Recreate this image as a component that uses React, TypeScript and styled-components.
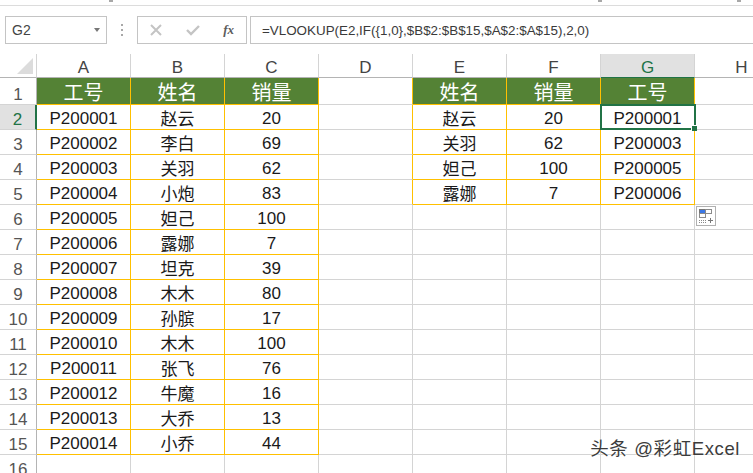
import React from 'react';
import styled, { createGlobalStyle } from 'styled-components';

const GlobalStyle = createGlobalStyle`
  html, body {
    margin: 0;
    padding: 0;
    background: #fff;
    overflow: hidden;
  }
`;

const FONT = `"Liberation Sans", "Noto Sans CJK SC", sans-serif`;

const Page = styled.div`
  position: relative;
  width: 753px;
  height: 473px;
  overflow: hidden;
  background: #fff;
  font-family: ${FONT};
`;

const RibbonEdge = styled.div`
  position: relative;
  height: 5px;
  border-bottom: 1px solid #dcdcdc;
  display: flex;
  align-items: flex-start;
`;

const RibbonTick = styled.span<{ $gap: number }>`
  width: 4px;
  height: 2px;
  margin-left: ${(p) => p.$gap}px;
  background: #a8a8a8;
`;

const FormulaRow = styled.div`
  display: flex;
  align-items: stretch;
  height: 28px;
  margin-top: 10px;
  padding-left: 5px;
`;

const NameBox = styled.div`
  box-sizing: border-box;
  width: 102px;
  border: 1px solid #c4c4c4;
  display: flex;
  align-items: center;
  justify-content: space-between;
  padding: 0 6px 0 6px;
  font-size: 14px;
  color: #444;
`;

const Caret = styled.span`
  width: 0;
  height: 0;
  border-left: 3.5px solid transparent;
  border-right: 3.5px solid transparent;
  border-top: 4px solid #777;
`;

const Grip = styled.div`
  width: 30px;
  display: flex;
  flex-direction: column;
  align-items: center;
  justify-content: center;
  gap: 3px;
`;

const GripDot = styled.span`
  width: 2px;
  height: 2px;
  background: #a8a8a8;
`;

const FxGroup = styled.div`
  box-sizing: border-box;
  width: 110px;
  border: 1px solid #c4c4c4;
  display: flex;
  align-items: center;
  padding: 0 12px 0 12px;
  justify-content: space-between;
`;

const FxLabel = styled.span`
  font-family: "Liberation Serif", serif;
  font-style: italic;
  font-weight: bold;
  font-size: 13px;
  color: #5c5c5c;
`;

const FormulaBox = styled.div`
  box-sizing: border-box;
  flex: 1;
  margin-left: 3px;
  border: 1px solid #c4c4c4;
  border-right: none;
  display: flex;
  align-items: center;
  padding-left: 11px;
  font-size: 13.4px;
  color: #3a3a3a;
  white-space: nowrap;
`;

const Sheet = styled.div`
  display: grid;
  grid-template-columns: 37px repeat(8, 94px);
  grid-template-rows: 24px 27px repeat(15, 25px);
  margin-top: 10px;
`;

const Corner = styled.div`
  position: relative;
  border-right: 1px solid #d4d4d4;
  border-bottom: 1px solid #b4b4b4;
  &::after {
    content: '';
    position: absolute;
    right: 3px;
    bottom: 3px;
    border-style: solid;
    border-width: 0 0 16px 16px;
    border-color: transparent transparent #dcdcdc transparent;
  }
`;

const ColHead = styled.div<{ $active?: boolean }>`
  display: flex;
  align-items: center;
  justify-content: center;
  padding-top: 5px;
  box-sizing: border-box;
  font-size: 17px;
  color: ${(p) => (p.$active ? '#217346' : '#444')};
  background: ${(p) => (p.$active ? '#e1e1e1' : '#fff')};
  border-right: 1px solid #d4d4d4;
  border-bottom: 1px solid ${(p) => (p.$active ? '#217346' : '#b4b4b4')};
`;

const RowHead = styled.div<{ $active?: boolean }>`
  display: flex;
  align-items: flex-end;
  justify-content: center;
  box-sizing: border-box;
  font-size: 17px;
  line-height: 19px;
  color: ${(p) => (p.$active ? '#217346' : '#555')};
  background: ${(p) => (p.$active ? '#e1e1e1' : '#fff')};
  border-right: ${(p) => (p.$active ? '2px solid #217346' : '1px solid #b4b4b4')};
  border-bottom: 1px solid #d4d4d4;
`;

const Cell = styled.div<{ $kind?: 'head' | 'data' | 'plain'; $beforeTable?: boolean; $latin?: boolean }>`
  position: relative;
  box-sizing: border-box;
  display: flex;
  align-items: center;
  justify-content: center;
  white-space: nowrap;
  padding-top: ${(p) => (p.$latin ? 4 : 0)}px;
  font-size: ${(p) => (p.$kind === 'head' ? 20 : 17)}px;
  color: ${(p) => (p.$kind === 'head' ? '#fff' : '#1a1a1a')};
  background: ${(p) => (p.$kind === 'head' ? '#548235' : '#fff')};
  border-right: 1px solid ${(p) => (p.$kind === 'head' || p.$kind === 'data' || p.$beforeTable ? '#ffc000' : '#d4d4d4')};
  border-bottom: 1px solid ${(p) => (p.$kind === 'head' || p.$kind === 'data' ? '#ffc000' : '#d4d4d4')};
`;

const Selection = styled.div`
  position: absolute;
  z-index: 2;
  left: -1px;
  top: -1px;
  right: -2px;
  bottom: -1px;
  border: 2px solid #217346;
  pointer-events: none;
  &::after {
    content: '';
    position: absolute;
    right: -3px;
    bottom: -3px;
    width: 5px;
    height: 5px;
    background: #217346;
    border-left: 1px solid #fff;
    border-top: 1px solid #fff;
  }
`;

const PasteOptions = styled.div`
  position: absolute;
  z-index: 3;
  left: 696px;
  top: 206px;
  width: 20px;
  height: 20px;
  box-sizing: border-box;
  border: 1px solid #b0b0b0;
  background: #fff;
`;

const Watermark = styled.div`
  position: absolute;
  z-index: 3;
  right: 13px;
  top: 438px;
  font-size: 18.5px;
  letter-spacing: 0.6px;
  line-height: 22px;
  color: #3c3c3c;
  white-space: nowrap;
  text-shadow: 0 0 2px #fff;
`;

const left = [
  ['P200001', '赵云', '20'],
  ['P200002', '李白', '69'],
  ['P200003', '关羽', '62'],
  ['P200004', '小炮', '83'],
  ['P200005', '妲己', '100'],
  ['P200006', '露娜', '7'],
  ['P200007', '坦克', '39'],
  ['P200008', '木木', '80'],
  ['P200009', '孙膑', '17'],
  ['P200010', '木木', '100'],
  ['P200011', '张飞', '76'],
  ['P200012', '牛魔', '16'],
  ['P200013', '大乔', '13'],
  ['P200014', '小乔', '44'],
];

const right = [
  ['赵云', '20', 'P200001'],
  ['关羽', '62', 'P200003'],
  ['妲己', '100', 'P200005'],
  ['露娜', '7', 'P200006'],
];

const columns = ['A', 'B', 'C', 'D', 'E', 'F', 'G', 'H'];

const isLatin = (text?: string) => !!text && /^[P0-9]/.test(text);

const CrossIcon = () => (
  <svg width="12" height="12" viewBox="0 0 12 12">
    <path d="M1 1 L11 11 M11 1 L1 11" stroke="#c4c4c4" strokeWidth="2" fill="none" />
  </svg>
);

const CheckIcon = () => (
  <svg width="14" height="12" viewBox="0 0 14 12">
    <path d="M1 6 L5 10 L13 2" stroke="#c4c4c4" strokeWidth="2.4" fill="none" />
  </svg>
);

const PasteIcon = () => (
  <svg width="18" height="18" viewBox="0 0 18 18">
    <rect x="2.5" y="2.5" width="6" height="4" fill="#3b78e7" stroke="#777" />
    <rect x="8.5" y="2.5" width="6" height="4" fill="#fff" stroke="#8a8a8a" />
    <rect x="2.5" y="6.5" width="6" height="4" fill="#fff" stroke="#8a8a8a" />
    <path d="M2 13.5 H9 M2 15.5 H9" stroke="#8a8a8a" strokeDasharray="1 1" />
    <path d="M11 13.5 H16 M13.5 11 V16" stroke="#777" />
  </svg>
);

function App() {
  const rows = Array.from({ length: 15 }, (_, i) => i + 2);

  return (
    <Page>
      <GlobalStyle />
      <RibbonEdge>
        <RibbonTick $gap={109} />
        <RibbonTick $gap={485} />
        <RibbonTick $gap={135} />
      </RibbonEdge>

      <FormulaRow>
        <NameBox>
          G2
          <Caret />
        </NameBox>
        <Grip>
          <GripDot />
          <GripDot />
          <GripDot />
        </Grip>
        <FxGroup>
          <CrossIcon />
          <CheckIcon />
          <FxLabel>fx</FxLabel>
        </FxGroup>
        <FormulaBox>=VLOOKUP(E2,IF({'{'}1,0{'}'},$B$2:$B$15,$A$2:$A$15),2,0)</FormulaBox>
      </FormulaRow>

      <Sheet>
        <Corner />
        {columns.map((c) => (
          <ColHead key={c} $active={c === 'G'}>
            {c}
          </ColHead>
        ))}

        <RowHead>1</RowHead>
        <Cell $kind="head">工号</Cell>
        <Cell $kind="head">姓名</Cell>
        <Cell $kind="head">销量</Cell>
        <Cell $beforeTable />
        <Cell $kind="head">姓名</Cell>
        <Cell $kind="head">销量</Cell>
        <Cell $kind="head">工号</Cell>
        <Cell />

        {rows.map((n) => {
          const l = left[n - 2];
          const r = right[n - 2];
          return (
            <React.Fragment key={n}>
              <RowHead $active={n === 2}>{n}</RowHead>
              {[0, 1, 2].map((i) => (
                <Cell key={i} $kind={l ? 'data' : 'plain'} $latin={isLatin(l?.[i])}>
                  {l?.[i]}
                </Cell>
              ))}
              <Cell $beforeTable={!!r} />
              {[0, 1, 2].map((i) => (
                <Cell key={i} $kind={r ? 'data' : 'plain'} $latin={isLatin(r?.[i])}>
                  {r?.[i]}
                  {n === 2 && i === 2 && <Selection />}
                </Cell>
              ))}
              <Cell />
            </React.Fragment>
          );
        })}
      </Sheet>

      <PasteOptions>
        <PasteIcon />
      </PasteOptions>
      <Watermark>头条 @彩虹Excel</Watermark>
    </Page>
  );
}

export default App;
